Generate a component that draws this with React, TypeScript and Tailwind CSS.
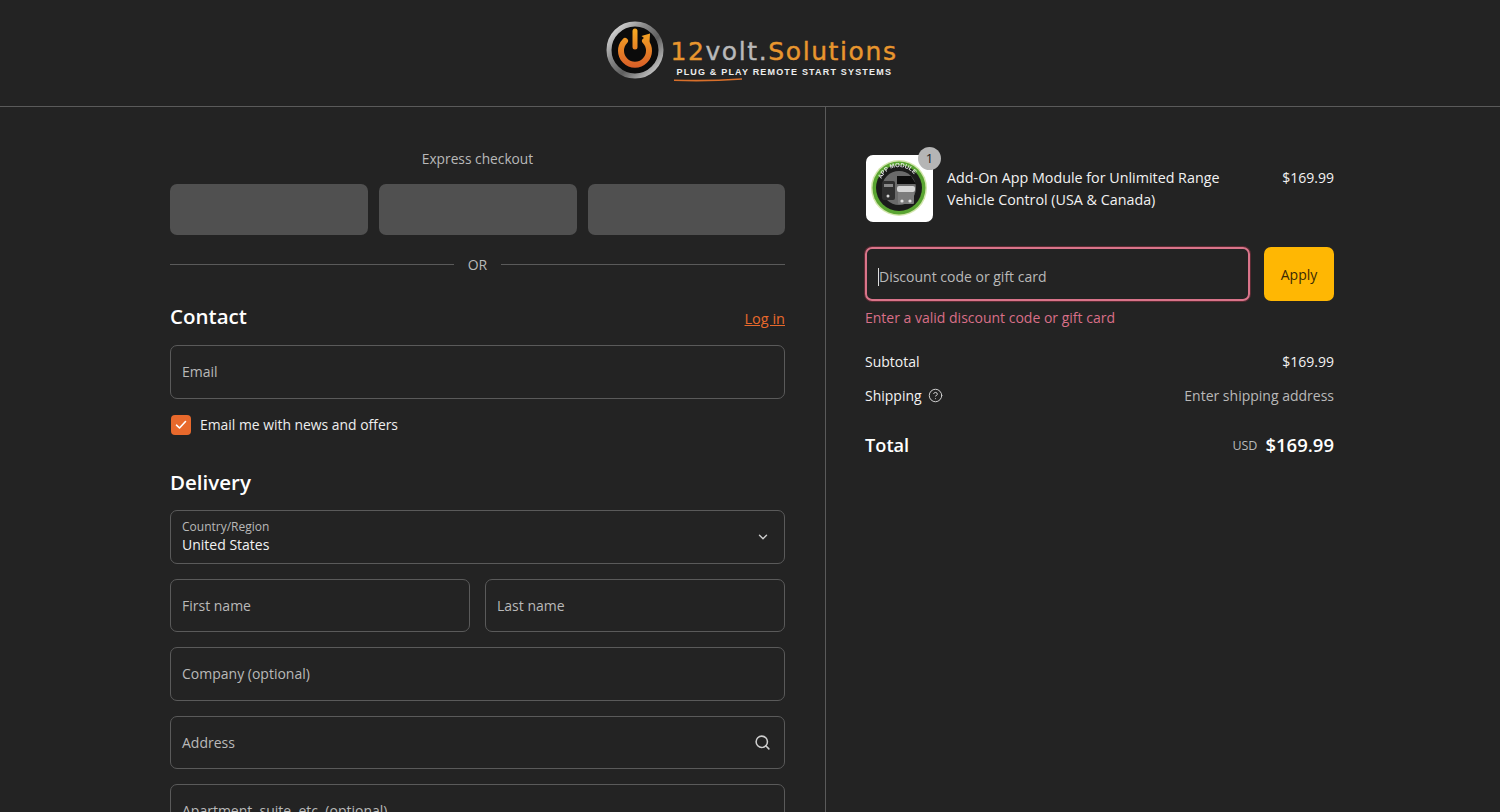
import { ChevronDown, CircleHelp, Search } from 'lucide-react';

const font = "font-['Open_Sans','Noto_Sans',sans-serif]";

function Field({ label, icon, className = '' }: { label: string; icon?: React.ReactNode; className?: string }) {
  return (
    <div className={`flex h-[53.5px] items-center justify-between rounded-[7px] border border-[#5a5a5a] pl-[11px] pr-[13px] text-[14px] text-[#b9b9b9] ${className}`}>
      <span>{label}</span>
      {icon}
    </div>
  );
}

function Logo() {
  return (
    <div className="flex items-center gap-[6px]">
      <svg width="58" height="58" viewBox="0 0 58 58" className="mt-[1px]">
        <defs>
          <linearGradient id="ring" x1="0" y1="0" x2="1" y2="1">
            <stop offset="0" stopColor="#efefef" />
            <stop offset="0.35" stopColor="#8a8a8a" />
            <stop offset="0.6" stopColor="#5f5f5f" />
            <stop offset="1" stopColor="#e0e0e0" />
          </linearGradient>
          <linearGradient id="power" gradientUnits="userSpaceOnUse" x1="29" y1="10" x2="29" y2="46">
            <stop offset="0" stopColor="#f5a623" />
            <stop offset="1" stopColor="#d95f28" />
          </linearGradient>
        </defs>
        <circle cx="29" cy="29" r="26" fill="#0b0b0b" stroke="url(#ring)" strokeWidth="5" />
        <path d="M19 20a14 14 0 1 0 20 0" fill="none" stroke="url(#power)" strokeWidth="6" strokeLinecap="round" />
        <path d="M35.5 15 44 12.5 43.5 21.5Z" fill="url(#power)" />
        <path d="M29 9v17" stroke="#0b0b0b" strokeWidth="9" />
        <path d="M29 10v16" stroke="url(#power)" strokeWidth="5" strokeLinecap="round" />
      </svg>
      <div className="mt-[18px] flex flex-col items-start">
        <div className="mt-[1px] font-['DejaVu_Sans',sans-serif] text-[25px] leading-[30px] tracking-[1.6px] [-webkit-text-stroke:0.4px]">
          <span className="text-[#e8962e]">12</span>
          <span className="text-[#b9b9b9]">volt.</span>
          <span className="text-[#e8962e]">Solutions</span>
        </div>
        <div className="ml-[6px] font-['Liberation_Sans',sans-serif] text-[9px] font-bold leading-[11px] tracking-[1.18px] text-[#eeeeee]">
          PLUG &amp; PLAY REMOTE START SYSTEMS
        </div>
        <svg className="ml-[4px]" width="68" height="4" viewBox="0 0 68 4">
          <path d="M0 2.2C20 3 45 2.6 68 1" stroke="#d9702b" strokeWidth="1.6" fill="none" />
        </svg>
      </div>
    </div>
  );
}

function ProductThumb() {
  return (
    <div className="relative ml-[1px] h-[67px] w-[67px] shrink-0">
      <div className="flex h-full w-full items-center justify-center rounded-[7px] bg-white pb-px pr-[2px]">
        <svg width="58" height="58" viewBox="0 0 58 58" className="blur-[0.4px]">
          <defs>
            <path id="arc" d="M10 27a19 19 0 0 1 38 0" />
          </defs>
          <circle cx="29" cy="29" r="28" fill="#d3e6ad" />
          <circle cx="29" cy="29" r="26.5" fill="#5aa532" />
          <circle cx="29" cy="29" r="23" fill="#1b1b1b" />
          <circle cx="29" cy="29" r="17" fill="#6a6a6a" />
          <text className="font-['Liberation_Sans',sans-serif] text-[6px] font-bold" fill="#e6e6e6">
            <textPath href="#arc" startOffset="7">APP MODULE</textPath>
          </text>
          <rect x="12" y="22" width="13" height="19" rx="2" fill="#2f2f2f" />
          <rect x="14" y="25" width="9" height="3" fill="#8a8a8a" />
          <path d="M27 17h14l5 8H27z" fill="#0d0d0d" />
          <rect x="27" y="27" width="18" height="6" rx="2" fill="#d4d4d4" />
          <rect x="28" y="33" width="16" height="12" rx="1" fill="#7c7c7c" />
          <circle cx="18" cy="37" r="1.5" fill="#d8d8d8" />
          <circle cx="32" cy="42" r="1.6" fill="#e2e2e2" />
          <circle cx="40" cy="42" r="1.6" fill="#e2e2e2" />
        </svg>
      </div>
      <span className="absolute right-[-8px] top-[-8px] flex h-[23px] w-[23px] items-center justify-center rounded-full bg-[#b5b5b5] text-[13px] text-[#222222]">
        1
      </span>
    </div>
  );
}

export default function App() {
  return (
    <div className={`flex h-screen flex-col overflow-hidden bg-[#232323] text-white ${font}`}>
      <header className="flex h-[107px] shrink-0 items-center justify-center border-b border-[#5a5a5a] pb-[7px] pl-[4px]">
        <Logo />
      </header>
      <div className="flex min-h-0 flex-1">
        <main className="w-[826px] shrink-0 border-r border-[#5a5a5a] pl-[170px] pr-[40px] pt-[41px]">
          <div className="text-center text-[13.75px] leading-[21px] text-[#b9b9b9]">Express checkout</div>
          <div className="mt-[15px] grid grid-cols-[198px_198px_197px] gap-[11px]">
            <div className="h-[51px] rounded-[7px] bg-[#505050]" />
            <div className="h-[51px] rounded-[7px] bg-[#505050]" />
            <div className="h-[51px] rounded-[7px] bg-[#505050]" />
          </div>
          <div className="mt-[18.5px] flex items-center gap-[14px] text-[14px] leading-[21px] text-[#b9b9b9]">
            <div className="h-px flex-1 bg-[#5a5a5a]" />
            OR
            <div className="h-px flex-1 bg-[#5a5a5a]" />
          </div>

          <div className="mt-[25.5px] flex items-end justify-between">
            <h2 className="text-[20.5px] font-semibold leading-[32px]">Contact</h2>
            <a className="mb-[3px] text-[14.5px] leading-[21px] text-[#e8692c] underline">Log in</a>
          </div>
          <Field label="Email" className="mt-[13px]" />
          <label className="mt-[16px] flex items-center gap-[9px] pl-px text-[13.9px] leading-[20px] text-[#eeeeee]">
            <span className="flex h-5 w-5 items-center justify-center rounded-[4px] bg-[#e8692c]">
              <svg width="12" height="10" viewBox="0 0 12 10" fill="none">
                <path d="M1.5 5.2 4.5 8l6-6.5" stroke="#ffffff" strokeWidth="1.6" strokeLinecap="round" strokeLinejoin="round" />
              </svg>
            </span>
            Email me with news and offers
          </label>

          <h2 className="mt-[31.5px] text-[20.5px] font-semibold leading-[32px]">Delivery</h2>
          <div className="mt-[12px] flex h-[53.5px] items-center justify-between rounded-[7px] border border-[#5a5a5a] pl-[11px] pr-[14px]">
            <div className="pt-px">
              <div className="text-[12px] leading-[16px] text-[#b9b9b9]">Country/Region</div>
              <div className="text-[14px] leading-[20px] text-[#f2f2f2]">United States</div>
            </div>
            <ChevronDown size={14} strokeWidth={2.4} className="text-[#cfcfcf]" />
          </div>
          <div className="mt-[15px] grid grid-cols-2 gap-[15px]">
            <Field label="First name" />
            <Field label="Last name" />
          </div>
          <Field label="Company (optional)" className="mt-[15px]" />
          <Field
            label="Address"
            className="mt-[15px]"
            icon={<Search size={17} strokeWidth={2.2} className="text-[#cfcfcf]" />}
          />
          <Field label="Apartment, suite, etc. (optional)" className="mt-[15px]" />
        </main>

        <aside className="w-[508px] shrink-0 pl-[39px] pt-[48px]">
          <div className="flex items-center">
            <ProductThumb />
            <div className="ml-[14px] w-[300px] text-[14.3px] leading-[22px] text-[#f2f2f2]">
              Add-On App Module for Unlimited Range Vehicle Control (USA &amp; Canada)
            </div>
            <div className="mb-[22px] ml-auto text-[14px] leading-[22px] text-[#f2f2f2]">$169.99</div>
          </div>

          <div className="mt-[25px] flex gap-[14px]">
            <div className="flex h-[54px] flex-1 items-center rounded-[7px] border-2 border-[#d9748a] pl-[11px] pt-[5px] text-[14px] text-[#b9b9b9] shadow-[0_0_0_1px_#5c2a33]">
              <span className="h-[18px] w-px bg-[#dddddd]" />
              Discount code or gift card
            </div>
            <button className="h-[54px] w-[70px] rounded-[7px] bg-[#ffb703] text-[14px] font-medium text-[#3a2a05]">
              Apply
            </button>
          </div>
          <div className="mt-[6px] text-[14px] leading-[21px] text-[#d96f88]">Enter a valid discount code or gift card</div>

          <div className="mt-[23px] flex justify-between text-[14px] leading-[21px] text-[#f2f2f2]">
            <span>Subtotal</span>
            <span>$169.99</span>
          </div>
          <div className="mt-[13px] flex items-center justify-between text-[14px] leading-[21px]">
            <span className="flex items-center gap-[6px] text-[#f2f2f2]">
              Shipping
              <CircleHelp size={15} strokeWidth={1.6} className="text-[#cfcfcf]" />
            </span>
            <span className="text-[#b9b9b9]">Enter shipping address</span>
          </div>
          <div className="mt-[25px] flex items-center justify-between">
            <span className="text-[18.2px] font-semibold leading-[28px]">Total</span>
            <span className="flex items-center gap-2">
              <span className="mt-[3px] text-[12.5px] text-[#b9b9b9]">USD</span>
              <span className="text-[18.5px] font-semibold leading-[28px]">$169.99</span>
            </span>
          </div>
        </aside>
      </div>
    </div>
  );
}
